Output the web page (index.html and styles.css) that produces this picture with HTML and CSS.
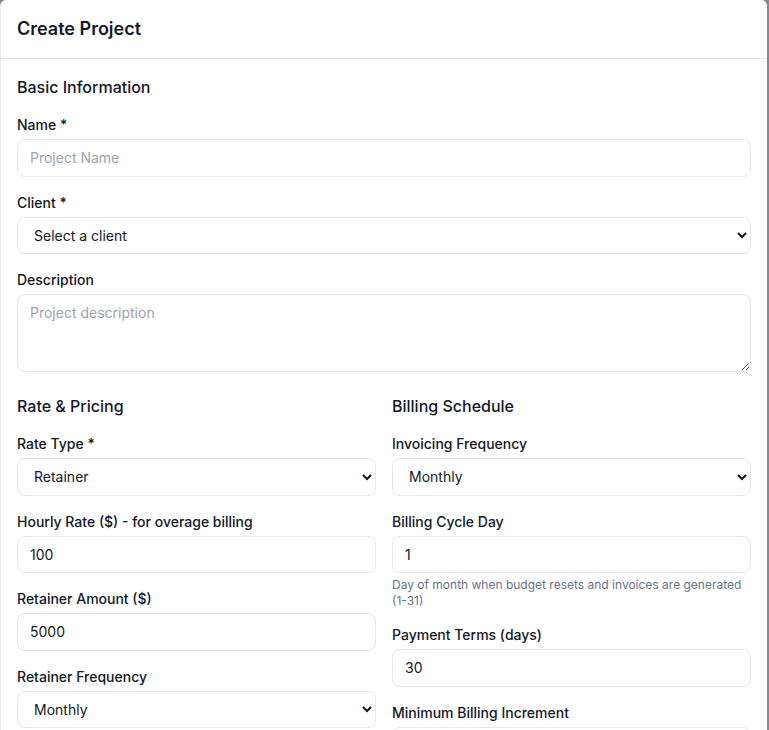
FILE: index.html
```html
<!DOCTYPE html>
<html lang="en">

<head>
    <meta charset="UTF-8">
    <meta name="viewport" content="width=device-width, initial-scale=1.0">
    <title>Create Project</title>
    <link rel="stylesheet" href="styles.css">
</head>

<body>
    <div class="modal">
        <div class="modalHead">
            <h2>Create Project</h2>
        </div>
        <form class="modalBody">
            <h3>Basic Information</h3>
            <div class="field">
                <label for="name">Name *</label>
                <input type="text" id="name" placeholder="Project Name">
            </div>
            <div class="field">
                <label for="client">Client *</label>
                <select id="client">
                    <option>Select a client</option>
                </select>
            </div>
            <div class="field">
                <label for="desc">Description</label>
                <textarea id="desc" rows="3" placeholder="Project description"></textarea>
            </div>

            <div class="cols">
                <div class="col">
                    <h3>Rate &amp; Pricing</h3>
                    <div class="field">
                        <label for="rateType">Rate Type *</label>
                        <select id="rateType">
                            <option>Retainer</option>
                        </select>
                    </div>
                    <div class="field">
                        <label for="hourly">Hourly Rate ($) - for overage billing</label>
                        <input type="text" id="hourly" value="100">
                    </div>
                    <div class="field">
                        <label for="retAmount">Retainer Amount ($)</label>
                        <input type="text" id="retAmount" value="5000">
                    </div>
                    <div class="field">
                        <label for="retFreq">Retainer Frequency</label>
                        <select id="retFreq">
                            <option>Monthly</option>
                        </select>
                    </div>
                </div>
                <div class="col">
                    <h3>Billing Schedule</h3>
                    <div class="field">
                        <label for="invFreq">Invoicing Frequency</label>
                        <select id="invFreq">
                            <option>Monthly</option>
                        </select>
                    </div>
                    <div class="field">
                        <label for="cycleDay">Billing Cycle Day</label>
                        <input type="text" id="cycleDay" value="1">
                        <p class="help">Day of month when budget resets and invoices are generated (1-31)</p>
                    </div>
                    <div class="field">
                        <label for="terms">Payment Terms (days)</label>
                        <input type="text" id="terms" value="30">
                    </div>
                    <div class="field">
                        <label for="minInc">Minimum Billing Increment</label>
                        <input type="text" id="minInc">
                    </div>
                </div>
            </div>
        </form>
    </div>
</body>

</html>
```

FILE: styles.css
```css
body {
    margin: 0;
    background-color: #858a8f;
    font-family: Inter, "Noto Sans", sans-serif;
    color: #111827;
    height: 730px;
    overflow: hidden;
}

.modal {
    width: 766px;
    height: 730px;
    background-color: white;
    border-left: 1px solid #e5e7eb;
    border-radius: 6px 6px 0 0;
    overflow: hidden;
}

.modalHead {
    padding: 16px 16px 16px;
    border-bottom: 1px solid #e5e7eb;
}

.modalHead h2 {
    margin: 0;
    font-size: 18px;
    line-height: 26px;
    font-weight: 600;
}

.modalBody {
    padding: 16px 16px;
}

h3 {
    margin: 0 0 16px;
    font-size: 16px;
    line-height: 24px;
    font-weight: 500;
}

.field {
    margin-bottom: 16px;
}

label {
    display: block;
    font-size: 14px;
    line-height: 20px;
    font-weight: 500;
    color: #111827;
    margin-bottom: 4px;
}

input,
select,
textarea {
    display: block;
    box-sizing: border-box;
    width: 100%;
    font-family: Inter, "Noto Sans", sans-serif;
    font-size: 14px;
    line-height: 20px;
    color: #111827;
    background-color: white;
    border: 1px solid #e5e7eb;
    border-radius: 8px;
    padding: 8px 12px;
    margin: 0;
}

input,
select {
    height: 37.5px;
}

textarea {
    height: 77.5px;
    resize: vertical;
}

::placeholder {
    color: #9ca3af;
}

.cols {
    display: grid;
    grid-template-columns: 1fr 1fr;
    column-gap: 16px;
    margin-top: 22.5px;
}

.cols .field:last-child {
    margin-bottom: 0;
}

.help {
    margin: 4px 0 0;
    font-size: 12px;
    line-height: 16px;
    color: #64748b;
}
```
